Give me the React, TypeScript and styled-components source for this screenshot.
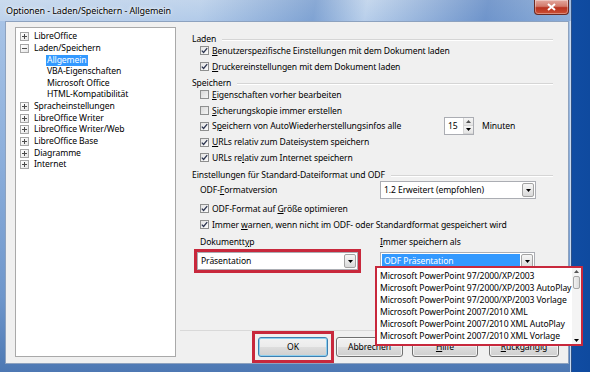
import React from 'react';
import styled, { createGlobalStyle } from 'styled-components';

const GlobalStyle = createGlobalStyle`
  html, body { margin: 0; padding: 0; }
  body {
    width: 590px;
    height: 372px;
    overflow: hidden;
    font-family: "Noto Sans", "Liberation Sans", sans-serif;
    font-size: 8.6px;
    letter-spacing: -0.1px;
    color: #000;
  }
`;

const Screen = styled.div`
  display: flex;
  width: 590px;
  height: 372px;
  background: linear-gradient(90deg, #0b2f6e 0%, #1552b4 25%, #1d66cf 60%, #0f4a9f 100%);
`;

const Window = styled.div`
  width: 571px;
  flex-shrink: 0;
  display: flex;
  flex-direction: column;
  background: linear-gradient(180deg, #b9cfe9 0%, #a7c3e6 6%, #8eb0dc 40%, #6e96cb 80%, #4d78b3 100%);
  border-right: 1px solid #2f5186;
  box-shadow: inset -1px 0 0 #c9daf0;
`;

const TitleBar = styled.div`
  height: 21px;
  display: flex;
  justify-content: space-between;
  align-items: flex-start;
  background: linear-gradient(100deg, rgba(255,255,255,0.25) 0%, rgba(255,255,255,0.12) 35%, rgba(50,100,175,0.35) 55%, rgba(255,255,255,0.18) 64%, rgba(40,90,170,0.45) 85%, rgba(60,110,180,0.25) 100%);
`;

const Title = styled.span`
  line-height: 21px;
  padding-left: 6px;
  font-size: 9px;
  text-shadow: 0 0 5px #fff, 0 0 2px #fff;
`;

const CloseButton = styled.div`
  width: 33px;
  height: 14px;
  margin-right: 2px;
  border: 1px solid #6b2a22;
  border-top: none;
  border-radius: 0 0 4px 4px;
  background: linear-gradient(180deg, #e3a89e 0%, #d27a6b 45%, #b8321f 55%, #cc5035 100%);
  box-shadow: inset 0 0 0 1px rgba(255, 255, 255, 0.35);
  display: flex;
  align-items: center;
  justify-content: center;
`;

const Client = styled.div`
  flex: 1;
  display: flex;
  margin: 0 2px 8px 5px;
  padding: 5px 0 6px 9px;
  background: #f0f0f0;
  border: 1px solid #8da2bf;
`;

const Tree = styled.div`
  width: 161px;
  flex-shrink: 0;
  box-sizing: border-box;
  background: #fff;
  border: 1px solid #a9a9a9;
  padding: 3px 0 0 4px;
`;

const TreeRow = styled.div<{ $level: number }>`
  height: 11.64px;
  display: flex;
  align-items: center;
  padding-left: ${p => (p.$level ? 26 : 0)}px;
`;

const Expander = styled.span`
  width: 7px;
  height: 7px;
  border: 1px solid #a6a6a6;
  margin-right: 4px;
  position: relative;
  flex-shrink: 0;
  background: linear-gradient(135deg, #fff 0%, #e6e6e6 100%);
  &::before {
    content: '';
    position: absolute;
    left: 1px;
    top: 3px;
    width: 5px;
    height: 1px;
    background: #4b4b4b;
  }
`;

const Plus = styled(Expander)`
  &::after {
    content: '';
    position: absolute;
    left: 3px;
    top: 1px;
    width: 1px;
    height: 5px;
    background: #4b4b4b;
  }
`;

const TreeLabel = styled.span<{ $selected?: boolean }>`
  padding: 0 1px;
  line-height: 11px;
  background: ${p => (p.$selected ? '#3399ff' : 'transparent')};
  color: ${p => (p.$selected ? '#fff' : '#000')};
`;

const RightCol = styled.div`
  flex: 1;
  display: flex;
  flex-direction: column;
  margin-left: 4px;
`;

const Content = styled.div`
  flex: 1;
  padding: 8px 15px 0 12px;
`;

const Header = styled.div<{ $gap?: number }>`
  height: 8px;
  margin-top: ${p => p.$gap ?? 0}px;
  display: flex;
  align-items: center;
  &::after {
    content: '';
    flex: 1;
    height: 1px;
    margin-left: 6px;
    background: #d5d5d5;
    box-shadow: 0 1px 0 #fff;
  }
`;

const Row = styled.div<{ $h?: number }>`
  height: ${p => p.$h ?? 15.75}px;
  display: flex;
  align-items: center;
  padding-left: 8px;
`;

const Box = styled.span<{ $checked?: boolean }>`
  width: 9px;
  height: 9px;
  box-sizing: border-box;
  border: 1px solid #8e8f8f;
  background: ${p => (p.$checked ? 'linear-gradient(135deg, #e4e4e4 0%, #fbfbfb 100%)' : 'linear-gradient(135deg, #d9d9d9 0%, #f4f4f4 100%)')};
  margin-right: 3px;
  flex-shrink: 0;
  display: flex;
  align-items: center;
  justify-content: center;
`;

const Label = styled.span<{ $w?: number }>`
  white-space: nowrap;
  ${p => (p.$w ? `width: ${p.$w}px; flex-shrink: 0;` : '')}
`;

const Mn = styled.span`
  text-decoration: underline;
  text-underline-offset: 1px;
`;

const SpinBox = styled.div`
  width: 30px;
  height: 18px;
  box-sizing: border-box;
  border: 1px solid #abadb3;
  background: #fff;
  display: flex;
  align-items: center;
  justify-content: space-between;
  padding-left: 3px;
`;

const SpinButtons = styled.div`
  width: 9px;
  height: 16px;
  display: flex;
  flex-direction: column;
  border-left: 1px solid #d6d6d6;
`;

const SpinHalf = styled.span`
  flex: 1;
  display: flex;
  align-items: center;
  justify-content: center;
  background: linear-gradient(180deg, #f6f6f6, #e4e4e4);
  border-bottom: 1px solid #d6d6d6;
`;

const Unit = styled.span`
  margin-left: 8px;
`;

const Select = styled.div<{ $w: number }>`
  width: ${p => p.$w}px;
  height: 18px;
  box-sizing: border-box;
  border: 1px solid #abadb3;
  background: #fff;
  display: flex;
  align-items: center;
  padding: 1px;
  flex-shrink: 0;
`;

const SelectValue = styled.span<{ $active?: boolean }>`
  flex: 1;
  align-self: stretch;
  display: flex;
  align-items: center;
  padding-left: 2px;
  margin-right: 1px;
  background: ${p => (p.$active ? '#3399ff' : 'transparent')};
  color: ${p => (p.$active ? '#fff' : '#000')};
`;

const ArrowButton = styled.span`
  width: 12px;
  align-self: stretch;
  box-sizing: border-box;
  border: 1px solid #a3a3a3;
  border-radius: 2px;
  background: linear-gradient(180deg, #f6f6f6 0%, #e9e9e9 50%, #d9d9d9 100%);
  display: flex;
  align-items: center;
  justify-content: center;
`;

const Highlight = styled.div<{ $offset?: number }>`
  outline: 3px solid #c8283c;
  outline-offset: ${p => p.$offset ?? 0}px;
`;

const TypeGroups = styled.div`
  display: flex;
  margin-top: 3.5px;
`;

const TypeGroup = styled.div<{ $left: number }>`
  position: relative;
  margin-left: ${p => p.$left}px;
  display: flex;
  flex-direction: column;
`;

const GroupLabel = styled.span<{ $indent?: number }>`
  height: 12px;
  line-height: 12px;
  padding-left: ${p => p.$indent ?? 0}px;
  margin-bottom: 4px;
`;

const Popup = styled.div`
  position: absolute;
  left: -5px;
  top: 30px;
  width: 208px;
  height: 80px;
  box-sizing: border-box;
  border: 2.5px solid #c8283c;
  background: #fff;
  display: flex;
  z-index: 5;
`;

const PopupList = styled.div`
  flex: 1;
  padding: 1.5px 0 0 3px;
`;

const PopupItem = styled.div`
  height: 12px;
  line-height: 12px;
  white-space: nowrap;
`;

const ScrollBar = styled.div`
  width: 9px;
  display: flex;
  flex-direction: column;
  align-items: center;
  padding: 2px 0;
  background: #f4f4f4;
`;

const Thumb = styled.span`
  width: 7px;
  height: 13px;
  margin-top: 3px;
  box-sizing: border-box;
  border: 1px solid #a6a6a6;
  border-radius: 2px;
  background: linear-gradient(90deg, #f1f1f1, #dcdcdc);
`;

const Filler = styled.span`
  flex: 1;
`;

const Footer = styled.div`
  display: flex;
  justify-content: flex-end;
  padding: 6px 9px 0 0;
  height: 27px;
  box-sizing: border-box;
  border-top: 1px solid #d9d9d9;
`;

const Button = styled.div<{ $w: number; $gap?: number; $default?: boolean }>`
  width: ${p => p.$w}px;
  height: 20px;
  margin-left: ${p => p.$gap ?? 0}px;
  box-sizing: border-box;
  border: 1px solid ${p => (p.$default ? '#3c7fb1' : '#707070')};
  border-radius: 3px;
  background: linear-gradient(180deg, #f2f2f2 0%, #ebebeb 50%, #dddddd 51%, #cfcfcf 100%);
  box-shadow: inset 0 0 0 1px ${p => (p.$default ? '#8fd0ef' : 'rgba(255,255,255,0.7)')};
  display: flex;
  align-items: center;
  justify-content: center;
`;

const Check = () => (
  <svg width="7" height="7" viewBox="0 0 7 7">
    <path d="M0.8 3.6 L2.6 5.5 L6.2 1.2" stroke="#2c3550" strokeWidth="1.3" fill="none" />
  </svg>
);

const Down = () => (
  <svg width="5" height="3" viewBox="0 0 5 3">
    <path d="M0 0 H5 L2.5 3 Z" fill="#000" />
  </svg>
);

const Up = () => (
  <svg width="5" height="3" viewBox="0 0 5 3">
    <path d="M0 3 H5 L2.5 0 Z" fill="#555" />
  </svg>
);

const CheckRow = ({ checked, children, w }: { checked?: boolean; children: React.ReactNode; w?: number }) => (
  <>
    <Box $checked={checked}>{checked && <Check />}</Box>
    <Label $w={w}>{children}</Label>
  </>
);

const tree = [
  { label: 'LibreOffice', level: 0, open: false },
  { label: 'Laden/Speichern', level: 0, open: true },
  { label: 'Allgemein', level: 1, selected: true },
  { label: 'VBA-Eigenschaften', level: 1 },
  { label: 'Microsoft Office', level: 1 },
  { label: 'HTML-Kompatibilität', level: 1 },
  { label: 'Spracheinstellungen', level: 0, open: false },
  { label: 'LibreOffice Writer', level: 0, open: false },
  { label: 'LibreOffice Writer/Web', level: 0, open: false },
  { label: 'LibreOffice Base', level: 0, open: false },
  { label: 'Diagramme', level: 0, open: false },
  { label: 'Internet', level: 0, open: false },
];

const formats = [
  'Microsoft PowerPoint 97/2000/XP/2003',
  'Microsoft PowerPoint 97/2000/XP/2003 AutoPlay',
  'Microsoft PowerPoint 97/2000/XP/2003 Vorlage',
  'Microsoft PowerPoint 2007/2010 XML',
  'Microsoft PowerPoint 2007/2010 XML AutoPlay',
  'Microsoft PowerPoint 2007/2010 XML Vorlage',
];

export default function App() {
  return (
    <>
      <GlobalStyle />
      <Screen>
        <Window>
          <TitleBar>
            <Title>Optionen - Laden/Speichern - Allgemein</Title>
            <CloseButton>
              <svg width="9" height="8" viewBox="0 0 9 8">
                <path d="M1 1 L8 7 M8 1 L1 7" stroke="#fff" strokeWidth="2" />
              </svg>
            </CloseButton>
          </TitleBar>
          <Client>
            <Tree>
              {tree.map(t => (
                <TreeRow key={t.label} $level={t.level}>
                  {t.level === 0 && (t.open ? <Expander /> : <Plus />)}
                  <TreeLabel $selected={t.selected}>{t.label}</TreeLabel>
                </TreeRow>
              ))}
            </Tree>
            <RightCol>
              <Content>
                <Header>Laden</Header>
                <Row>
                  <CheckRow checked><Mn>B</Mn>enutzerspezifische Einstellungen mit dem Dokument laden</CheckRow>
                </Row>
                <Row>
                  <CheckRow checked><Mn>D</Mn>ruckereinstellungen mit dem Dokument laden</CheckRow>
                </Row>
                <Header $gap={4.5}>Speichern</Header>
                <Row>
                  <CheckRow><Mn>E</Mn>igenschaften vorher bearbeiten</CheckRow>
                </Row>
                <Row>
                  <CheckRow><Mn>S</Mn>icherungskopie immer erstellen</CheckRow>
                </Row>
                <Row>
                  <CheckRow checked w={232}>S<Mn>p</Mn>eichern von AutoWiederherstellungsinfos alle</CheckRow>
                  <SpinBox>
                    15
                    <SpinButtons>
                      <SpinHalf><Up /></SpinHalf>
                      <SpinHalf><Down /></SpinHalf>
                    </SpinButtons>
                  </SpinBox>
                  <Unit>Minuten</Unit>
                </Row>
                <Row>
                  <CheckRow checked><Mn>U</Mn>RLs relativ zum Dateisystem speichern</CheckRow>
                </Row>
                <Row>
                  <CheckRow checked>URLs re<Mn>l</Mn>ativ zum Internet speichern</CheckRow>
                </Row>
                <Header $gap={5.25}>Einstellungen für Standard-Dateiformat und ODF</Header>
                <Row $h={22}>
                  <Label $w={180}>ODF-<Mn>F</Mn>ormatversion</Label>
                  <Select $w={156}>
                    <SelectValue>1.2 Erweitert (empfohlen)</SelectValue>
                    <ArrowButton><Down /></ArrowButton>
                  </Select>
                </Row>
                <Row>
                  <CheckRow checked>ODF-Format auf <Mn>G</Mn>röße optimieren</CheckRow>
                </Row>
                <Row>
                  <CheckRow checked>Immer <Mn>w</Mn>arnen, wenn nicht im ODF- oder Standardformat gespeichert wird</CheckRow>
                </Row>
                <TypeGroups>
                  <TypeGroup $left={5}>
                    <GroupLabel $indent={3}>Dokumentt<Mn>y</Mn>p</GroupLabel>
                    <Highlight>
                      <Select $w={161}>
                        <SelectValue>Präsentation</SelectValue>
                        <ArrowButton><Down /></ArrowButton>
                      </Select>
                    </Highlight>
                  </TypeGroup>
                  <TypeGroup $left={22}>
                    <GroupLabel><Mn>I</Mn>mmer speichern als</GroupLabel>
                    <Select $w={155}>
                      <SelectValue $active>ODF Präsentation</SelectValue>
                      <ArrowButton><Down /></ArrowButton>
                    </Select>
                    <Popup>
                      <PopupList>
                        {formats.map(f => (
                          <PopupItem key={f}>{f}</PopupItem>
                        ))}
                      </PopupList>
                      <ScrollBar>
                        <Up />
                        <Thumb />
                        <Filler />
                        <Down />
                      </ScrollBar>
                    </Popup>
                  </TypeGroup>
                </TypeGroups>
              </Content>
              <Footer>
                <Highlight $offset={3}>
                  <Button $w={70} $default>OK</Button>
                </Highlight>
                <Button $w={67} $gap={8}>Abbrechen</Button>
                <Button $w={66} $gap={9}><span><Mn>H</Mn>ilfe</span></Button>
                <Button $w={70} $gap={11}><span><Mn>R</Mn>ückgängig</span></Button>
              </Footer>
            </RightCol>
          </Client>
        </Window>
      </Screen>
    </>
  );
}
